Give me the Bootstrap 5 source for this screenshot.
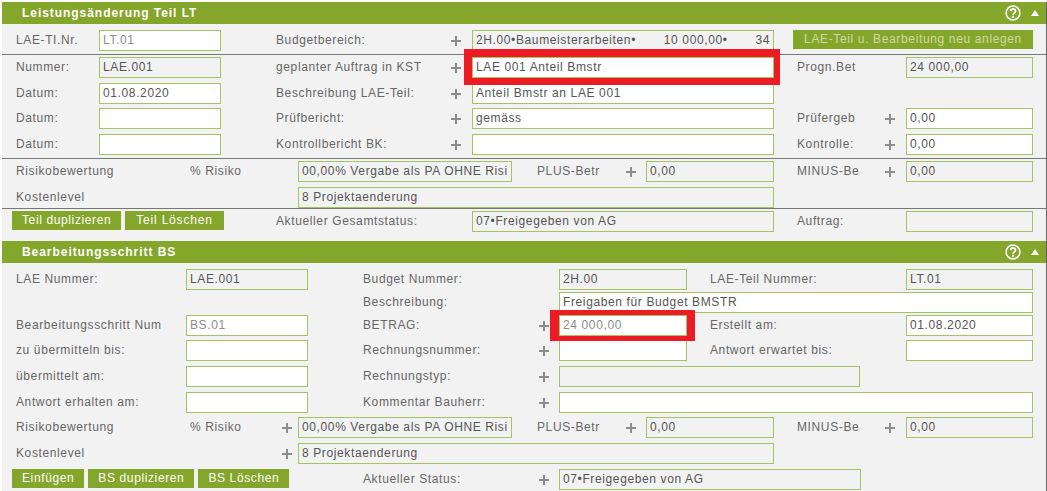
<!DOCTYPE html>
<html lang="de">
<head>
<meta charset="utf-8">
<title>Leistungsänderung</title>
<link href="https://cdn.jsdelivr.net/npm/bootstrap@5.3.0/dist/css/bootstrap.min.css" rel="stylesheet">
<style>
body{background:#fff;margin:0;font:12px/14px "Liberation Sans",Arial,sans-serif;letter-spacing:.62px;color:#666}
.sheet{margin:2px 0 0 2px;height:489px;background:#f2f2f2;overflow:hidden;border-right:1px solid #666}
.hdr{height:22px;background:#84a62b;color:#fff;font-weight:700;padding-left:20px;padding-right:7px;letter-spacing:.95px}
.hdr2{margin-top:9px}
.tri{width:0;height:0;border-left:4px solid transparent;border-right:4px solid transparent;border-bottom:6px solid #fff;margin-left:10px}
.gA,.gB,.gR{display:grid;margin-left:14px;width:1017px;height:21px}
.gA{grid-template-columns:83px 122px 55px 175px 21px 302px 23px 88px 21px 127px}
.gB{grid-template-columns:170px 122px 55px 176px 20px 128px 23px 176px 20px 127px}
.gR{grid-template-columns:174px 92px 16px 214px 25px 89px 20px 128px 23px 88px 21px 127px}
.lbl{display:flex;align-items:center;padding-bottom:2px;white-space:nowrap}
.fld.form-control{border:1px solid #a6c262;border-radius:0;background:#fff;padding:0 3px;height:21px;min-height:0;font-size:12px;line-height:19px;letter-spacing:.62px;color:#555;white-space:nowrap;box-shadow:none}
.fld.form-control.ro{background:#f2f2f2}
.fld.form-control.dim{color:#8b8b8b}
.plusc{display:flex;align-items:center}
.act.btn{background:#84a62b;border:0;border-radius:0;color:#fff;font-size:12px;line-height:19px;letter-spacing:.62px;padding:0 10px;height:19px}
.act.btn.off{color:#cddaa6;width:240px;letter-spacing:.64px;padding:0}
.act.btn.roomy{padding:0 11px;letter-spacing:.8px}
.nudge{margin-left:-4px}
.sep{margin:0;opacity:1;border:0;border-top:1px solid #777}
.m2{margin-top:2px}.m3{margin-top:3px}.m5{margin-top:5px}.m6{margin-top:6px}
.s3{grid-column:3}.s4{grid-column:4}.s6{grid-column:6}.s8{grid-column:8}.s10{grid-column:10}
.to9b{grid-column:4 / 9}.to10b{grid-column:6 / 11}.r1to4{grid-column:1 / 4}
.wtyp{grid-column:6 / 9;width:301px}
.wsts{grid-column:6 / 9;width:302px}
.mark7,.mark9{position:relative}
.mark7::after,.mark9::after{content:"";position:absolute;border:solid #ed1c24;pointer-events:none}
.mark7::after{inset:-9px -7px -8px -9px;border-width:8px 6px 7px 8px}
.mark9::after{inset:-6px -9px -6px -10px;border-width:5px 8px 5px 9px}
</style>
</head>
<body>
<svg width="0" height="0" class="position-absolute"><symbol id="plus" viewBox="0 0 10 10"><path d="M5 0v10M0 5h10" stroke="#8c8c8c" stroke-width="2"/></symbol></svg>
<main class="sheet">

<section>
  <div class="hdr d-flex align-items-center">
    <span class="flex-grow-1">Leistungsänderung Teil LT</span>
    <svg width="16" height="16" viewBox="0 0 16 16"><circle cx="8" cy="8" r="6.9" fill="none" stroke="#fff" stroke-width="1.5"/><path d="M5.6 6.3c0-3.1 4.9-3.1 4.9 0 0 1.7-2.4 1.6-2.4 3.4" fill="none" stroke="#fff" stroke-width="1.8"/><rect x="7.1" y="10.8" width="2" height="2" fill="#fff"/></svg>
    <span class="tri"></span>
  </div>
  <div class="gA m6">
    <span class="lbl">LAE-TI.Nr.</span><div class="form-control fld dim">LT.01</div>
    <span class="lbl s4">Budgetbereich:</span><span class="plusc"><svg width="10" height="10"><use href="#plus"/></svg></span>
    <div class="form-control fld ro d-flex justify-content-between"><span>2H.00•Baumeisterarbeiten•</span><span>10 000,00•</span><span>34</span></div>
    <div class="s8 nudge"><button type="button" class="btn act off">LAE-Teil u. Bearbeitung neu anlegen</button></div>
  </div>
  <hr class="sep m3">
  <div class="gA m2">
    <span class="lbl">Nummer:</span><div class="form-control fld ro">LAE.001</div>
    <span class="lbl s4">geplanter Auftrag in KST</span><span class="plusc"><svg width="10" height="10"><use href="#plus"/></svg></span>
    <div class="form-control fld mark7">LAE 001 Anteil Bmstr</div>
    <span class="lbl s8">Progn.Bet</span><div class="form-control fld ro s10">24 000,00</div>
  </div>
  <div class="gA m5">
    <span class="lbl">Datum:</span><div class="form-control fld">01.08.2020</div>
    <span class="lbl s4">Beschreibung LAE-Teil:</span><span class="plusc"><svg width="10" height="10"><use href="#plus"/></svg></span>
    <div class="form-control fld">Anteil Bmstr an LAE 001</div>
  </div>
  <div class="gA mt-1">
    <span class="lbl">Datum:</span><div class="form-control fld"></div>
    <span class="lbl s4">Prüfbericht:</span><span class="plusc"><svg width="10" height="10"><use href="#plus"/></svg></span>
    <div class="form-control fld">gemäss</div>
    <span class="lbl s8">Prüfergeb</span><span class="plusc"><svg width="10" height="10"><use href="#plus"/></svg></span><div class="form-control fld">0,00</div>
  </div>
  <div class="gA m5">
    <span class="lbl">Datum:</span><div class="form-control fld"></div>
    <span class="lbl s4">Kontrollbericht BK:</span><span class="plusc"><svg width="10" height="10"><use href="#plus"/></svg></span>
    <div class="form-control fld"></div>
    <span class="lbl s8">Kontrolle:</span><span class="plusc"><svg width="10" height="10"><use href="#plus"/></svg></span><div class="form-control fld">0,00</div>
  </div>
  <hr class="sep m3">
  <div class="gR m2">
    <span class="lbl">Risikobewertung</span><span class="lbl">% Risiko</span>
    <div class="form-control fld ro s4">00,00% Vergabe als PA OHNE Risi</div>
    <span class="lbl s6">PLUS-Betr</span><span class="plusc"><svg width="10" height="10"><use href="#plus"/></svg></span><div class="form-control fld ro">0,00</div>
    <span class="lbl s10">MINUS-Be</span><span class="plusc"><svg width="10" height="10"><use href="#plus"/></svg></span><div class="form-control fld ro">0,00</div>
  </div>
  <div class="gR m5">
    <span class="lbl">Kostenlevel</span>
    <div class="form-control fld ro to9b">8 Projektaenderung</div>
  </div>
  <hr class="sep">
  <div class="gA m2">
    <div class="r1to4 nudge d-flex gap-1 align-items-start"><button type="button" class="btn act">Teil duplizieren</button><button type="button" class="btn act roomy">Teil Löschen</button></div>
    <span class="lbl s4">Aktueller Gesamtstatus:</span>
    <div class="form-control fld ro s6">07•Freigegeben von AG</div>
    <span class="lbl s8">Auftrag:</span><div class="form-control fld ro s10"></div>
  </div>
</section>

<section>
  <div class="hdr hdr2 d-flex align-items-center">
    <span class="flex-grow-1">Bearbeitungsschritt BS</span>
    <svg width="16" height="16" viewBox="0 0 16 16"><circle cx="8" cy="8" r="6.9" fill="none" stroke="#fff" stroke-width="1.5"/><path d="M5.6 6.3c0-3.1 4.9-3.1 4.9 0 0 1.7-2.4 1.6-2.4 3.4" fill="none" stroke="#fff" stroke-width="1.8"/><rect x="7.1" y="10.8" width="2" height="2" fill="#fff"/></svg>
    <span class="tri"></span>
  </div>
  <div class="gB m6">
    <span class="lbl">LAE Nummer:</span><div class="form-control fld ro">LAE.001</div>
    <span class="lbl s4">Budget Nummer:</span><div class="form-control fld ro s6">2H.00</div>
    <span class="lbl s8">LAE-Teil Nummer:</span><div class="form-control fld ro s10">LT.01</div>
  </div>
  <div class="gB m2">
    <span class="lbl s4">Beschreibung:</span><div class="form-control fld to10b">Freigaben für Budget BMSTR</div>
  </div>
  <div class="gB m2">
    <span class="lbl">Bearbeitungsschritt Num</span><div class="form-control fld dim">BS.01</div>
    <span class="lbl s4">BETRAG:</span><span class="plusc"><svg width="10" height="10"><use href="#plus"/></svg></span>
    <div class="form-control fld dim mark9">24 000,00</div>
    <span class="lbl s8">Erstellt am:</span><div class="form-control fld s10">01.08.2020</div>
  </div>
  <div class="gB mt-1">
    <span class="lbl">zu übermitteln bis:</span><div class="form-control fld"></div>
    <span class="lbl s4">Rechnungsnummer:</span><span class="plusc"><svg width="10" height="10"><use href="#plus"/></svg></span>
    <div class="form-control fld"></div>
    <span class="lbl s8">Antwort erwartet bis:</span><div class="form-control fld s10"></div>
  </div>
  <div class="gB m5">
    <span class="lbl">übermittelt am:</span><div class="form-control fld"></div>
    <span class="lbl s4">Rechnungstyp:</span><span class="plusc"><svg width="10" height="10"><use href="#plus"/></svg></span>
    <div class="form-control fld ro wtyp"></div>
  </div>
  <div class="gB m5">
    <span class="lbl">Antwort erhalten am:</span><div class="form-control fld"></div>
    <span class="lbl s4">Kommentar Bauherr:</span><span class="plusc"><svg width="10" height="10"><use href="#plus"/></svg></span>
    <div class="form-control fld to10b"></div>
  </div>
  <div class="gR mt-1">
    <span class="lbl">Risikobewertung</span><span class="lbl">% Risiko</span><span class="plusc"><svg width="10" height="10"><use href="#plus"/></svg></span>
    <div class="form-control fld ro">00,00% Vergabe als PA OHNE Risi</div>
    <span class="lbl s6">PLUS-Betr</span><span class="plusc"><svg width="10" height="10"><use href="#plus"/></svg></span><div class="form-control fld ro">0,00</div>
    <span class="lbl s10">MINUS-Be</span><span class="plusc"><svg width="10" height="10"><use href="#plus"/></svg></span><div class="form-control fld ro">0,00</div>
  </div>
  <div class="gR m5">
    <span class="lbl">Kostenlevel</span><span class="plusc s3"><svg width="10" height="10"><use href="#plus"/></svg></span>
    <div class="form-control fld ro to9b">8 Projektaenderung</div>
  </div>
  <div class="gB m5">
    <div class="r1to4 nudge d-flex gap-1 align-items-start"><button type="button" class="btn act">Einfügen</button><button type="button" class="btn act">BS duplizieren</button><button type="button" class="btn act">BS Löschen</button></div>
    <span class="lbl s4">Aktueller Status:</span><span class="plusc"><svg width="10" height="10"><use href="#plus"/></svg></span>
    <div class="form-control fld ro wsts">07•Freigegeben von AG</div>
  </div>
</section>
</main>
<script src="https://cdn.jsdelivr.net/npm/bootstrap@5.3.0/dist/js/bootstrap.bundle.min.js"></script>
</body>
</html>
